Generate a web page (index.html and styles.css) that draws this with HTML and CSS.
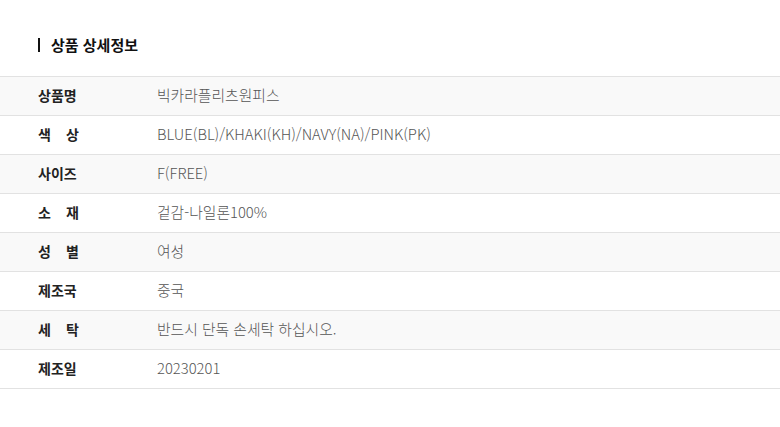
FILE: index.html
```html
<!DOCTYPE html>
<html lang="ko">
<head>
<meta charset="utf-8">
<link rel="stylesheet" href="styles.css">
</head>
<body>
<div class="page">
  <h2 class="title"><span class="bar"></span>상품 상세정보</h2>
  <div class="table">
    <div class="row alt"><div class="lbl">상품명</div><div class="val">빅카라플리츠원피스</div></div>
    <div class="row"><div class="lbl spread"><span>색</span><span>상</span></div><div class="val">BLUE(BL)/KHAKI(KH)/NAVY(NA)/PINK(PK)</div></div>
    <div class="row alt"><div class="lbl">사이즈</div><div class="val">F(FREE)</div></div>
    <div class="row"><div class="lbl spread"><span>소</span><span>재</span></div><div class="val">겉감-나일론100%</div></div>
    <div class="row alt"><div class="lbl spread"><span>성</span><span>별</span></div><div class="val">여성</div></div>
    <div class="row"><div class="lbl">제조국</div><div class="val">중국</div></div>
    <div class="row alt"><div class="lbl spread"><span>세</span><span>탁</span></div><div class="val">반드시 단독 손세탁 하십시오.</div></div>
    <div class="row"><div class="lbl">제조일</div><div class="val">20230201</div></div>
  </div>
</div>
</body>
</html>
```

FILE: styles.css
```css
html, body {
  margin: 0;
  padding: 0;
  background: #fff;
}
.page {
  font-family: "Noto Sans CJK KR", "Noto Sans", sans-serif;
  color: #222;
  padding-top: 35px;
}
.title {
  margin: 0 0 21px 38px;
  display: flex;
  align-items: center;
  gap: 11px;
  font-size: 15px;
  font-weight: 700;
  line-height: 20px;
  color: #111;
}
.bar {
  display: block;
  width: 2px;
  height: 14px;
  background: #111;
}
.table {
  border-top: 1px solid #e2e2e2;
}
.row {
  display: flex;
  align-items: center;
  height: 36px;
  padding-bottom: 2px;
  border-bottom: 1px solid #e2e2e2;
  background: #fff;
}
.row.alt {
  background: #f9f9f9;
}
.lbl {
  width: 41px;
  margin-left: 38px;
  font-size: 14px;
  line-height: 20px;
  font-weight: 700;
  color: #222;
  white-space: nowrap;
}
.lbl.spread {
  display: flex;
  justify-content: space-between;
}
.val {
  margin-left: 78px;
  font-size: 14.8px;
  line-height: 20px;
  font-weight: 300;
  color: #555;
  white-space: nowrap;
}
```
